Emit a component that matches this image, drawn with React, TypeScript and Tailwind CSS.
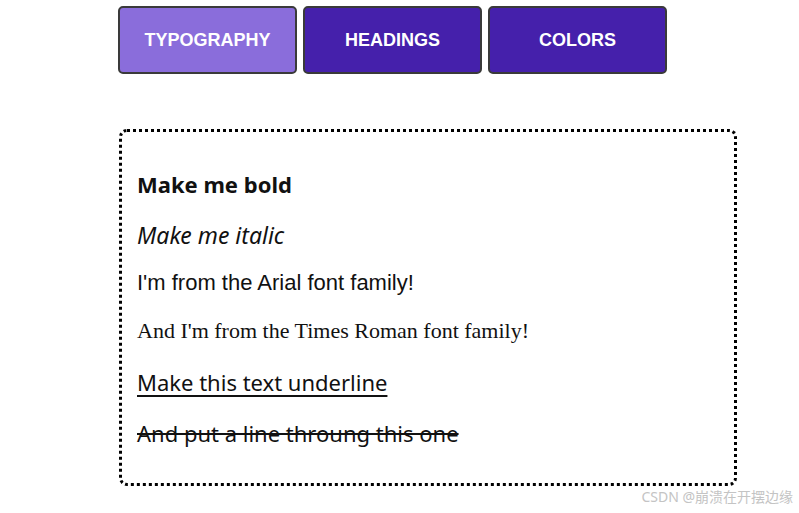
import React from "react";

export default function App() {
  return (
    <div className="relative w-[799px] h-[513px] bg-white overflow-hidden">
      <div className="flex gap-[6px] pl-[118px] pt-[6px] font-['Liberation_Sans',Arial,sans-serif]">
        <button className="w-[179px] h-[68px] rounded-[5px] border-2 border-[#3a3a3a] bg-[#8a6ddb] text-white font-bold text-[18px] flex items-center justify-center">TYPOGRAPHY</button>
        <button className="w-[179px] h-[68px] rounded-[5px] border-2 border-[#3a3a3a] bg-[#4520ab] text-white font-bold text-[18px] flex items-center justify-center">HEADINGS</button>
        <button className="w-[179px] h-[68px] rounded-[5px] border-2 border-[#3a3a3a] bg-[#4520ab] text-white font-bold text-[18px] flex items-center justify-center">COLORS</button>
      </div>
      <div className="ml-[119px] mt-[55px] w-[618px] h-[357px] border-[3px] border-dotted border-black rounded-[8px] pl-[15px] pt-[37px] flex flex-col text-[#111] font-['Noto_Sans','Open_Sans',sans-serif]">
        <p className="h-[30px] leading-[30px] text-[22px] font-bold">Make me bold</p>
        <p className="mt-[21px] h-[30px] leading-[30px] text-[23px] italic">Make me italic</p>
        <p className="mt-[18px] h-[30px] leading-[30px] text-[22px] font-['Liberation_Sans',Arial,sans-serif]">I'm from the Arial font family!</p>
        <p className="mt-[18px] h-[30px] leading-[30px] text-[22px] font-['Liberation_Serif','Times_New_Roman',serif]">And I'm from the Times Roman font family!</p>
        <p className="mt-[21px] h-[30px] leading-[30px] text-[22px] underline decoration-[2px] underline-offset-[4px]">Make this text underline</p>
        <p className="mt-[21px] h-[30px] leading-[30px] text-[22px] line-through decoration-[2px]">And put a line throung this one</p>
      </div>
      <div className="absolute right-[6px] bottom-[6px] text-[14px] text-[#c4c4c4] font-['Noto_Sans','Noto_Sans_CJK_SC',sans-serif]">CSDN @崩溃在开摆边缘</div>
    </div>
  );
}
